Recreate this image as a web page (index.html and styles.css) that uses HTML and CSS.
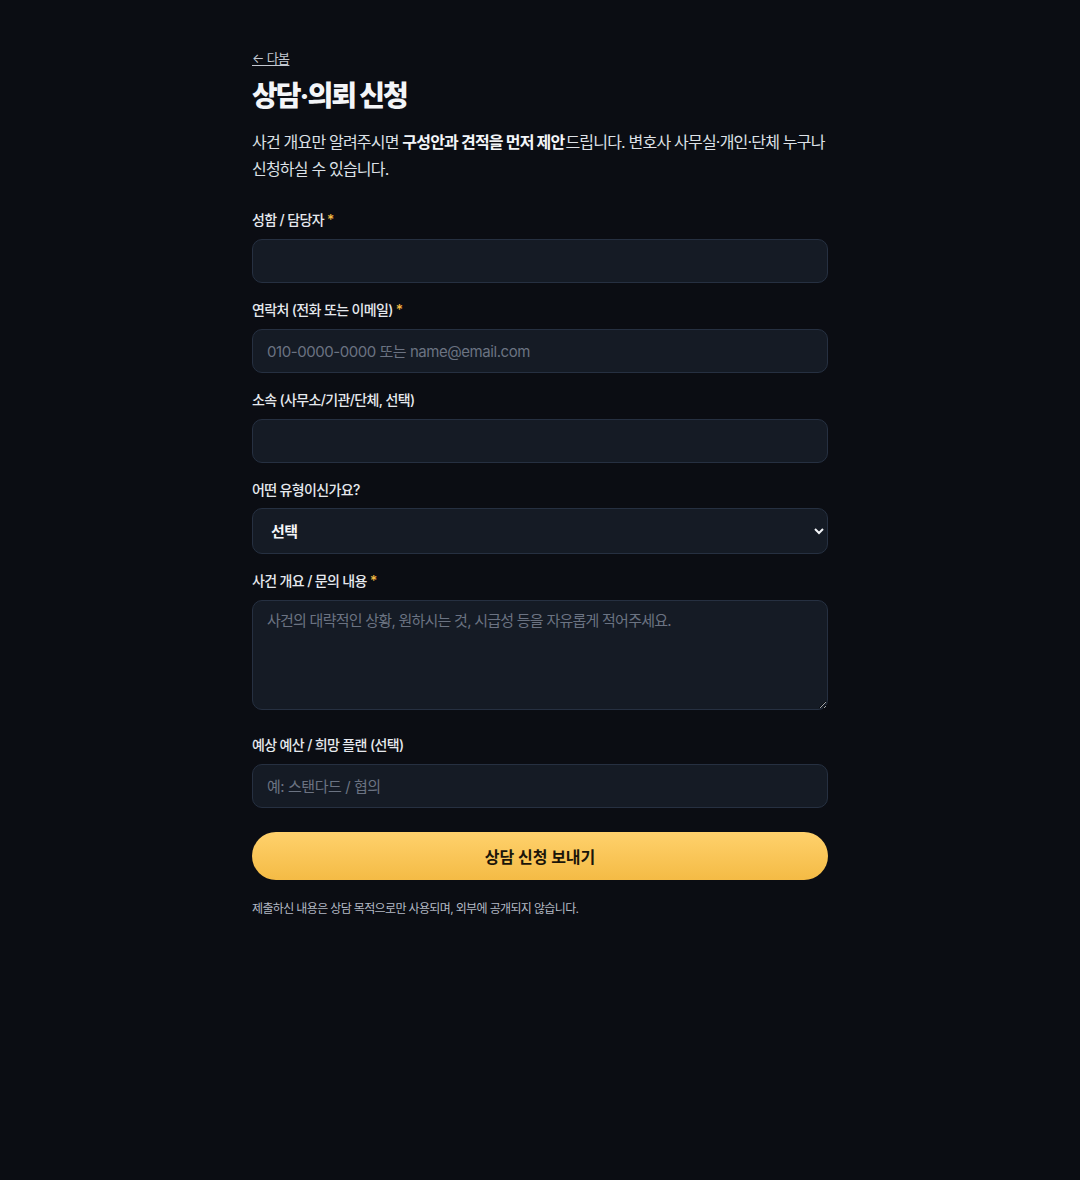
FILE: index.html
```html
<!DOCTYPE html>
<html lang="ko">
<head>
<meta charset="UTF-8">
<title>상담·의뢰 신청</title>
<link rel="stylesheet" href="styles.css">
</head>
<body>
  <main class="wrap">
    <a href="#" class="back">← 다봄</a>
    <h1 class="title">상담·의뢰 신청</h1>
    <p class="intro">사건 개요만 알려주시면 <strong>구성안과 견적을 먼저 제안</strong>드립니다. 변호사 사무실·개인·단체 누구나 신청하실 수 있습니다.</p>

    <form class="form" onsubmit="return false">
      <label class="field">
        <span class="label">성함 / 담당자 <em class="req">*</em></span>
        <input type="text" class="input">
      </label>
      <label class="field">
        <span class="label">연락처 (전화 또는 이메일) <em class="req">*</em></span>
        <input type="text" class="input" placeholder="010-0000-0000 또는 name@email.com">
      </label>
      <label class="field">
        <span class="label">소속 (사무소/기관/단체, 선택)</span>
        <input type="text" class="input">
      </label>
      <label class="field">
        <span class="label">어떤 유형이신가요?</span>
        <select class="input select">
          <option>선택</option>
          <option>변호사 사무실</option>
          <option>개인</option>
          <option>단체</option>
        </select>
      </label>
      <label class="field">
        <span class="label">사건 개요 / 문의 내용 <em class="req">*</em></span>
        <textarea class="input area" placeholder="사건의 대략적인 상황, 원하시는 것, 시급성 등을 자유롭게 적어주세요."></textarea>
      </label>
      <label class="field">
        <span class="label">예상 예산 / 희망 플랜 (선택)</span>
        <input type="text" class="input" placeholder="예: 스탠다드 / 협의">
      </label>
      <button type="submit" class="submit">상담 신청 보내기</button>
      <p class="note">제출하신 내용은 상담 목적으로만 사용되며, 외부에 공개되지 않습니다.</p>
    </form>
  </main>
</body>
</html>
```

FILE: styles.css
```css
html {
  color-scheme: dark;
}

body {
  margin: 0;
  background: #0b0d13;
  color: #e8ebf0;
  font-family: Inter, "Noto Sans CJK KR", sans-serif;
  letter-spacing: -0.04em;
  word-break: keep-all;
}

.wrap {
  width: 576px;
  margin: 0 auto;
  padding-top: 47px;
}

.back {
  display: inline-block;
  font-size: 13px;
  line-height: 18px;
  color: #c3c8d1;
  text-decoration: underline;
  text-underline-offset: 2px;
}

.title {
  margin: 10px 0 0;
  font-size: 28px;
  line-height: 38px;
  font-weight: 800;
  color: #f3f5f8;
  letter-spacing: -0.07em;
}

.intro {
  margin: 14px 0 0;
  font-size: 16px;
  line-height: 27px;
  color: #dde1e7;
  letter-spacing: -0.05em;
}

.intro strong {
  font-weight: 700;
  color: #f3f5f8;
  padding-right: 1px;
}

.form {
  margin-top: 26px;
  display: flex;
  flex-direction: column;
}

.field {
  display: flex;
  flex-direction: column;
  gap: 10px;
  margin-bottom: 16px;
}

.label {
  font-size: 14px;
  line-height: 20px;
  font-weight: 500;
  color: #e6e9ee;
  padding-top: 1px;
  margin-bottom: -1px;
}

.req {
  font-style: normal;
  color: #f5b942;
}

.input {
  box-sizing: border-box;
  width: 100%;
  height: 44px;
  padding: 0 14px;
  background: #151b25;
  border: 1px solid #263041;
  border-radius: 10px;
  color: #e8ebf0;
  font: inherit;
  font-size: 15px;
  letter-spacing: -0.03em;
  outline: none;
}

.input::placeholder {
  color: #6b7382;
}

.select {
  height: 46px;
  margin-top: -1px;
  padding: 0 10px 0 14px;
  font-weight: 600;
  color: #f3f5f8;
}

.area {
  height: 110px;
  padding: 9px 14px;
  resize: vertical;
  line-height: 22px;
  margin-bottom: 8px;
  letter-spacing: -0.05em;
}

.submit {
  margin-top: 8px;
  height: 48px;
  border: none;
  border-radius: 24px;
  background: linear-gradient(180deg, #ffd16c, #f4bb45);
  color: #1b1509;
  font: inherit;
  font-size: 16px;
  font-weight: 700;
  cursor: pointer;
}

.note {
  margin: 20px 0 0;
  font-size: 12px;
  line-height: 17px;
  color: #b4bac5;
}
```
